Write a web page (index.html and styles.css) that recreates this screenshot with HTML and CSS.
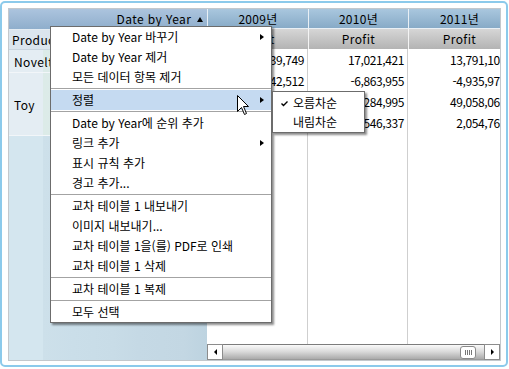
FILE: index.html
```html
<!DOCTYPE html>
<html lang="ko">
<head>
    <meta charset="UTF-8">
    <title>교차 테이블 1</title>
    <link rel="stylesheet" href="styles.css">
</head>
<body>
    <div class="frame">
        <div class="crosstab">
            <!-- row headers -->
            <div class="rows-pane">
                <div class="corner">Date by Year <span class="sort-up"></span></div>
                <div class="dim-row"><div class="dim-cell">Product</div></div>
                <div class="row-head novelty">Novelty</div>
                <div class="row-head toy">Toy</div>
                <div class="rows-rest"></div>
            </div>

            <!-- data -->
            <div class="data-pane">
                <div class="grid">
                    <div class="year">2009년</div>
                    <div class="year">2010년</div>
                    <div class="year">2011년</div>

                    <div class="measure">Profit</div>
                    <div class="measure">Profit</div>
                    <div class="measure">Profit</div>

                    <div class="val">14,839,749</div>
                    <div class="val">17,021,421</div>
                    <div class="val">13,791,104</div>

                    <div class="val">-2,942,512</div>
                    <div class="val">-6,863,955</div>
                    <div class="val">-4,935,973</div>

                    <div class="val">31,520,870</div>
                    <div class="val">38,284,995</div>
                    <div class="val">49,058,062</div>

                    <div class="val">1,230,117</div>
                    <div class="val">3,546,337</div>
                    <div class="val">2,054,768</div>

                    <div class="fill"></div>
                    <div class="fill"></div>
                    <div class="fill"></div>
                </div>
                <div class="hscroll">
                    <div class="sb-btn"><span class="tri-left"></span></div>
                    <div class="sb-track"><div class="sb-thumb"></div></div>
                    <div class="sb-btn"><span class="tri-right"></span></div>
                </div>
            </div>
        </div>
    </div>

    <!-- context menu -->
    <div class="menu">
        <div class="item">Date by Year 바꾸기<span class="sub-arrow"></span></div>
        <div class="item">Date by Year 제거</div>
        <div class="item">모든 데이터 항목 제거</div>
        <div class="sep"></div>
        <div class="item active">정렬<span class="sub-arrow"></span></div>
        <div class="sep"></div>
        <div class="item">Date by Year에 순위 추가</div>
        <div class="item">링크 추가<span class="sub-arrow"></span></div>
        <div class="item">표시 규칙 추가</div>
        <div class="item">경고 추가...</div>
        <div class="sep"></div>
        <div class="item">교차 테이블 1 내보내기</div>
        <div class="item">이미지 내보내기...</div>
        <div class="item">교차 테이블 1을(를) PDF로 인쇄</div>
        <div class="item">교차 테이블 1 삭제</div>
        <div class="sep"></div>
        <div class="item">교차 테이블 1 복제</div>
        <div class="sep"></div>
        <div class="item">모두 선택</div>
    </div>

    <div class="submenu">
        <div class="sub-item">
            <svg class="check" width="7" height="6" viewBox="0 0 7 6"><path d="M0.5 2.5 L2.5 4.5 L6.5 0.5" fill="none" stroke="#000" stroke-width="1.4"/></svg>
            오름차순
        </div>
        <div class="sub-item">내림차순</div>
    </div>

    <svg class="cursor" width="13" height="21" viewBox="0 0 13 21">
        <path d="M0.5 0.5 L0.5 16.5 L4.5 12.5 L7.5 19.5 L9.5 18.5 L6.5 11.5 L11.5 11.5 Z" fill="#fff" stroke="#000" stroke-width="1"/>
    </svg>
</body>
</html>
```

FILE: styles.css
```css
body {
    margin: 0;
    position: relative;
    background: #fff;
    font-family: "Noto Sans CJK KR", "Liberation Sans", sans-serif;
    font-size: 12px;
    color: #000;
}

.frame {
    margin: 1px 1px 2px 0;
    height: 353px;
    padding: 5px 5px 4px 6px;
    border: 2px solid #8ccaeb;
    border-radius: 5px;
}

.crosstab {
    display: flex;
    height: 351px;
    border: 1px solid #c4c8cc;
    overflow: hidden;
}

/* row header side */
.rows-pane {
    width: 198px;
    display: flex;
    flex-direction: column;
    background: linear-gradient(to right, #d4e6ef 0, #d4e6ef 34px, #cde0ea 34px, #cadee9 64px, #c8dce7 104px, #c5d9e5 130px, #c3d7e3 175px, #bdd3e0 198px);
}

.corner {
    height: 20px;
    line-height: 20px;
    text-align: right;
    padding-right: 4px;
    letter-spacing: 0.4px;
    background: linear-gradient(#acc4de, #8faecc);
    border-bottom: 1px solid #e4ecf3;
}

.sort-up {
    display: inline-block;
    width: 0;
    height: 0;
    margin-left: 2px;
    vertical-align: 2px;
    border-left: 3px solid transparent;
    border-right: 3px solid transparent;
    border-bottom: 5px solid #000;
}

.dim-row {
    height: 19px;
    background: #dbe5ee;
    border-bottom: 1px solid #c9d5df;
}

.dim-cell {
    line-height: 19px;
    padding-left: 3px;
    letter-spacing: 0.4px;
}

.row-head {
    padding-left: 5px;
    display: flex;
    align-items: center;
    letter-spacing: 0.4px;
    background: linear-gradient(to right, #e4edf3 0, #e4edf3 34px, #dcebe8 34px, #dde9ee 120px, #d6e4ec 198px);
    border-bottom: 1px solid #f2f6f9;
}

.novelty {
    height: 22px;
}

.toy {
    height: 62px;
}

.rows-rest {
    flex: 1;
}

/* data side */
.data-pane {
    flex: 1;
    display: flex;
    flex-direction: column;
    overflow: hidden;
    background: #fff;
}

.grid {
    flex: 1;
    display: grid;
    grid-template-columns: 101px 100px 102px;
    grid-template-rows: 20px 20px 21px 21px 21px 21px 1fr;
}

.year {
    text-align: center;
    line-height: 20px;
    letter-spacing: 0.3px;
    background: linear-gradient(#a9c7de, #87aac7);
    border-left: 1px solid #e8eff5;
    border-bottom: 1px solid #e8eff5;
}

.measure {
    text-align: center;
    line-height: 19px;
    letter-spacing: 0.4px;
    background: linear-gradient(#d6d6d6, #b3b3b3);
    border-left: 1px solid #f4f4f4;
}

.val {
    text-align: right;
    line-height: 21px;
    padding-right: 3px;
    letter-spacing: -0.4px;
    border-right: 1px solid #cfcfcf;
    white-space: nowrap;
}

.fill {
    border-right: 1px solid #cfcfcf;
}

/* horizontal scroll bar */
.hscroll {
    height: 16px;
    display: flex;
}

.sb-btn {
    width: 14px;
    border: 1px solid #8c8c8c;
    background: #fff;
    display: flex;
    align-items: center;
    justify-content: center;
}

.tri-left {
    border-top: 3px solid transparent;
    border-bottom: 3px solid transparent;
    border-right: 3px solid #000;
}

.tri-right {
    border-top: 3px solid transparent;
    border-bottom: 3px solid transparent;
    border-left: 3px solid #000;
}

.sb-track {
    flex: 1;
    position: relative;
    border-top: 1px solid #7c7c7c;
    border-bottom: 1px solid #9a9a9a;
    background: linear-gradient(#fafafa, #d8d8d8 50%, #aaaaaa);
}

.sb-thumb {
    position: absolute;
    right: 8px;
    top: 1px;
    width: 14px;
    height: 11px;
    border: 1px solid #8a8a8a;
    border-radius: 3px;
    background: repeating-linear-gradient(to right, #fff 0, #fff 1px, #777 1px, #777 2px) no-repeat center / 9px 5px, #fff;
}

/* context menu */
.menu {
    position: absolute;
    left: 50px;
    top: 26px;
    width: 220px;
    background: #fff;
    border: 1px solid #6c6c6c;
    box-shadow: 2px 2px 2px rgba(0, 0, 0, 0.45);
}

.item {
    position: relative;
    height: 20px;
    line-height: 20px;
    padding-left: 21px;
    white-space: nowrap;
}

.item.active {
    background: #c5daf1;
}

.sub-arrow {
    position: absolute;
    right: 7px;
    top: 7px;
    border-top: 3px solid transparent;
    border-bottom: 3px solid transparent;
    border-left: 4px solid #000;
}

.sep {
    height: 1px;
    margin: 1px 0;
    background: #a3a3a3;
}

.submenu {
    position: absolute;
    left: 272px;
    top: 91px;
    width: 91px;
    padding: 1px 0;
    background: #fff;
    border: 1px solid #6c6c6c;
    box-shadow: 2px 2px 2px rgba(0, 0, 0, 0.45);
}

.sub-item {
    position: relative;
    height: 19px;
    line-height: 19px;
    padding-left: 20px;
}

.check {
    position: absolute;
    left: 8px;
    top: 8px;
}

.cursor {
    position: absolute;
    left: 237px;
    top: 95px;
}
```
